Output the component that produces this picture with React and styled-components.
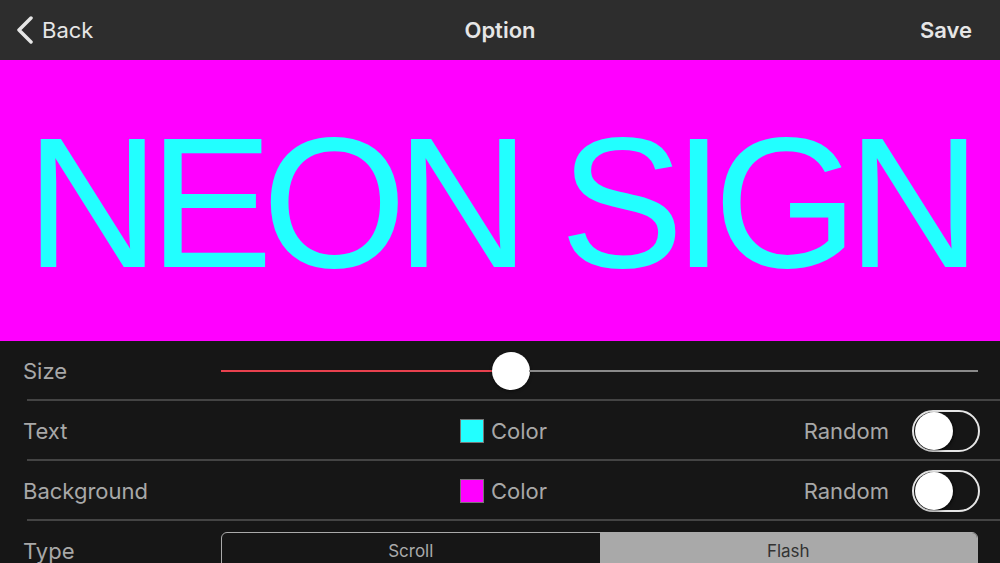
import React from "react";
import styled, { createGlobalStyle } from "styled-components";

const GlobalStyle = createGlobalStyle`
  html, body {
    margin: 0;
    padding: 0;
    background: #161616;
    overflow: hidden;
  }
  body {
    font-family: "Inter", "Liberation Sans", sans-serif;
  }
`;

const Page = styled.div`
  width: 1000px;
  height: 563px;
  display: flex;
  flex-direction: column;
  background: #161616;
  overflow: hidden;
`;

const NavBar = styled.div`
  height: 60px;
  flex-shrink: 0;
  background: #2d2d2d;
  display: grid;
  grid-template-columns: 1fr auto 1fr;
  align-items: center;
  padding: 0 16px;
  color: #e6e6e6;
  font-size: 22px;
`;

const BackButton = styled.div`
  display: flex;
  align-items: center;
  gap: 8px;
  justify-self: start;
`;

const Title = styled.div`
  font-weight: 600;
`;

const SaveButton = styled.div`
  justify-self: end;
  font-weight: 600;
  margin-right: 12px;
`;

const Banner = styled.div`
  height: 281px;
  flex-shrink: 0;
  background: #ff00ff;
  display: flex;
  align-items: center;
  justify-content: center;
  overflow: hidden;
`;

const SignText = styled.div`
  font-family: "Liberation Sans", Arial, sans-serif;
  font-size: 186px;
  line-height: 1;
  color: #22ffff;
  white-space: nowrap;
  letter-spacing: -11px;
  margin-top: 4px;
  margin-left: -4px;
`;

const Settings = styled.div`
  display: flex;
  flex-direction: column;
`;

const Row = styled.div`
  height: 60px;
  flex-shrink: 0;
  display: flex;
  align-items: center;
  padding: 0 20px 0 23px;
  position: relative;
  &::after {
    content: "";
    display: ${(p) => (p.$last ? "none" : "block")};
    position: absolute;
    left: 27px;
    right: 0;
    bottom: 0;
    height: 2px;
    background: #444;
  }
`;

const Label = styled.div`
  width: 198px;
  flex-shrink: 0;
  color: #a8a8a8;
  font-size: 22px;
`;

const Slider = styled.div`
  flex: 1;
  height: 40px;
  display: flex;
  align-items: center;
  margin-right: 2px;
`;

const Track = styled.div`
  height: 2px;
  background: ${(p) => p.$color};
  flex: ${(p) => p.$grow};
`;

const Thumb = styled.div`
  width: 38px;
  height: 38px;
  border-radius: 50%;
  background: #fff;
  flex-shrink: 0;
  margin: 0 -1px;
  box-shadow: 0 1px 3px rgba(0, 0, 0, 0.5);
`;

const Middle = styled.div`
  flex: 1;
  display: flex;
  align-items: center;
  padding-left: 239px;
  gap: 7px;
  color: #a8a8a8;
  font-size: 22px;
`;

const Swatch = styled.div`
  width: 22px;
  height: 22px;
  background: ${(p) => p.$color};
  border: 1px solid #777;
`;

const RandomLabel = styled.div`
  color: #a8a8a8;
  font-size: 22px;
  margin-right: 23px;
`;

const Toggle = styled.div`
  width: 68px;
  height: 42px;
  box-sizing: border-box;
  border: 2px solid #e6e6e6;
  border-radius: 21px;
  display: flex;
  align-items: center;
  padding: 0 1px;
`;

const Knob = styled.div`
  width: 38px;
  height: 38px;
  border-radius: 50%;
  background: #fff;
  box-shadow: 1px 1px 3px rgba(0, 0, 0, 0.6);
`;

const Segmented = styled.div`
  flex: 1;
  align-self: flex-start;
  height: 44px;
  margin-top: 11px;
  margin-right: 2px;
  display: flex;
  border: 1px solid #aaa;
  border-radius: 6px;
  overflow: hidden;
`;

const Segment = styled.div`
  flex: 1;
  display: flex;
  justify-content: center;
  padding-top: 8px;
  font-size: 17px;
  line-height: 20px;
  color: ${(p) => (p.$active ? "#333" : "#aaa")};
  background: ${(p) => (p.$active ? "#a9a9a9" : "transparent")};
`;

const ChevronLeft = () => (
  <svg width="18" height="28" viewBox="0 0 18 28">
    <path
      d="M15 2 L3 14 L15 26"
      fill="none"
      stroke="#e6e6e6"
      strokeWidth="3.5"
      strokeLinecap="round"
      strokeLinejoin="round"
    />
  </svg>
);

const ColorRow = ({ label, color, last }) => (
  <Row $last={last}>
    <Label>{label}</Label>
    <Middle>
      <Swatch $color={color} />
      Color
    </Middle>
    <RandomLabel>Random</RandomLabel>
    <Toggle>
      <Knob />
    </Toggle>
  </Row>
);

export default function App() {
  return (
    <>
      <GlobalStyle />
      <Page>
        <NavBar>
          <BackButton>
            <ChevronLeft />
            Back
          </BackButton>
          <Title>Option</Title>
          <SaveButton>Save</SaveButton>
        </NavBar>
        <Banner>
          <SignText>NEON SIGN</SignText>
        </Banner>
        <Settings>
          <Row>
            <Label>Size</Label>
            <Slider>
              <Track $color="#e8414e" $grow={272} />
              <Thumb />
              <Track $color="#8a8a8a" $grow={449} />
            </Slider>
          </Row>
          <ColorRow label="Text" color="#22ffff" />
          <ColorRow label="Background" color="#ff00ff" />
          <Row $last>
            <Label>Type</Label>
            <Segmented>
              <Segment>Scroll</Segment>
              <Segment $active>Flash</Segment>
            </Segmented>
          </Row>
        </Settings>
      </Page>
    </>
  );
}
